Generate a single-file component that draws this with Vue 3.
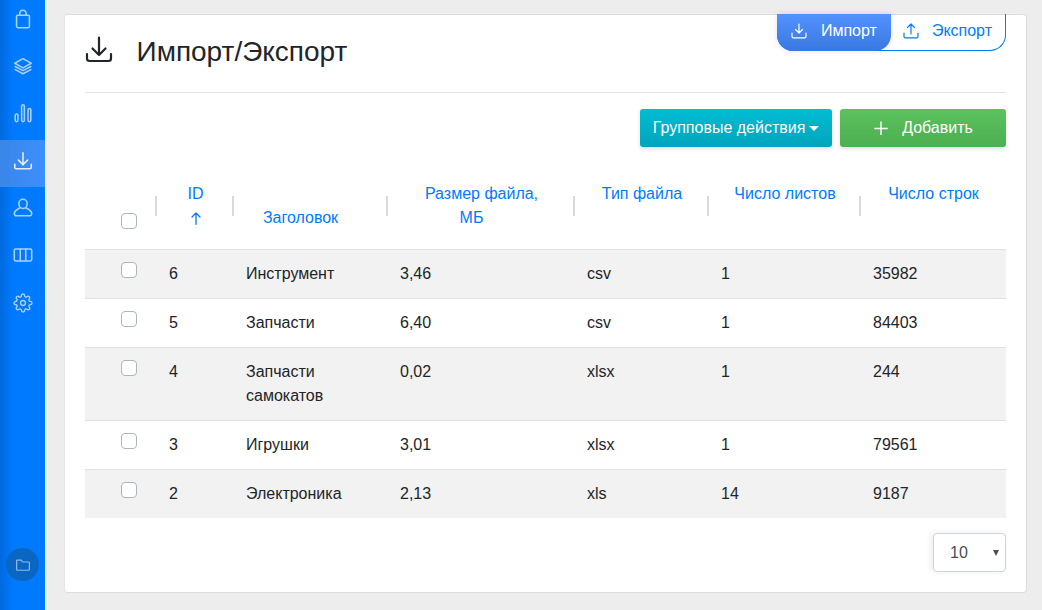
<template>
  <div class="page">
    <!-- Боковое меню -->
    <aside class="sidebar">
      <nav class="nav">
        <a
          v-for="item in menu"
          :key="item.id"
          class="nav-item"
          :class="{ active: item.id === 'import' }"
        >
          <svg :viewBox="item.box || '0 0 24 24'" class="nav-icon" fill="none" stroke="currentColor" stroke-width="1.7" stroke-linecap="round" stroke-linejoin="round">
            <path v-for="(d, i) in item.paths" :key="i" :d="d" />
          </svg>
        </a>
      </nav>
      <div class="folder">
        <svg viewBox="0 0 24 24" fill="none" stroke="currentColor" stroke-width="1.6" stroke-linejoin="round">
          <path d="M3.500 18V6.500c0-.6.4-1 1-1h5l2 2.500h8c.6 0 1 .4 1 1V18c0 .6-.4 1-1 1h-15c-.6 0-1-.4-1-1z" />
        </svg>
      </div>
    </aside>

    <main class="content">
      <section class="card">
        <header class="head">
          <div class="title-wrap">
            <svg class="title-icon" viewBox="0 0 28 28" fill="none" stroke="currentColor" stroke-width="2.2" stroke-linecap="round" stroke-linejoin="round">
              <path d="M14 1.500V19M7.500 12.500 14 19l6.500-6.500M2 18v4.500C2 24 3 25 4.500 25h19c1.500 0 2.500-1 2.500-2.500V18" />
            </svg>
            <h1 class="title">Импорт/Экспорт</h1>
          </div>
          <div class="tabs">
            <button class="tab tab-on">
              <svg viewBox="0 0 16 16" fill="none" stroke="currentColor" stroke-width="1.200" stroke-linecap="round" stroke-linejoin="round">
                <path d="M8 1v9M4.500 6.500 8 10l3.500-3.500M1 10v3.500c0 .8.500 1.300 1.300 1.300h11.400c.8 0 1.300-.5 1.300-1.300V10" />
              </svg>
              <span>Импорт</span>
            </button>
            <button class="tab tab-off">
              <svg viewBox="0 0 16 16" fill="none" stroke="currentColor" stroke-width="1.200" stroke-linecap="round" stroke-linejoin="round">
                <path d="M8 11V1M4.500 4.500 8 1l3.500 3.500M1 10v3.500c0 .8.500 1.300 1.300 1.300h11.400c.8 0 1.300-.5 1.300-1.300V10" />
              </svg>
              <span>Экспорт</span>
            </button>
          </div>
        </header>

        <div class="toolbar">
          <button class="btn btn-info">Групповые действия<i class="caret"></i></button>
          <button class="btn btn-success">
            <svg viewBox="0 0 14 14" fill="none" stroke="currentColor" stroke-width="1.400"><path d="M8 .5v13.500M1.300 7.500h13.400" /></svg>
            <span>Добавить</span>
          </button>
        </div>

        <table class="table">
          <colgroup>
            <col v-for="w in widths" :key="w" :style="{ width: w + 'px' }" />
          </colgroup>
          <thead>
            <tr>
              <th class="th-check"><span class="check"></span></th>
              <th class="sep">
                <a>ID</a>
                <span class="sort">
                  <svg viewBox="0 0 10 13" fill="none" stroke="currentColor" stroke-width="1.300" stroke-linecap="round" stroke-linejoin="round"><path d="M5 12.300V1M1 5l4-4 4 4" /></svg>
                </span>
              </th>
              <th class="sep th-title"><a>Заголовок</a></th>
              <th class="sep"><a>Размер файла,<br /><span class="unit">МБ</span></a></th>
              <th class="sep"><a>Тип файла</a><span class="sort"></span></th>
              <th class="sep"><a>Число листов</a><span class="sort"></span></th>
              <th class="sep"><a>Число строк</a><span class="sort"></span></th>
            </tr>
          </thead>
          <tbody>
            <tr v-for="row in rows" :key="row.id">
              <td class="td-check"><span class="check"></span></td>
              <td>{{ row.id }}</td>
              <td>{{ row.title }}</td>
              <td>{{ row.size }}</td>
              <td>{{ row.type }}</td>
              <td>{{ row.sheets }}</td>
              <td>{{ row.lines }}</td>
            </tr>
          </tbody>
        </table>

        <div class="pager">
          <div class="per-page"><span>10</span><i class="mini-caret"></i></div>
        </div>
      </section>
    </main>
  </div>
</template>

<script setup>
const widths = [72, 77, 154, 187, 134, 152, 145];

const menu = [
  { id: "bag", paths: ["M6 8h12a1 1 0 0 1 1 1v11a1.500 1.500 0 0 1-1.500 1.500h-11A1.500 1.500 0 0 1 5 20V9a1 1 0 0 1 1-1z", "M8.500 8V6a3.500 3.500 0 0 1 7 0v2"] },
  { id: "layers", paths: ["M12 4 3 9l9 5 9-5-9-5z", "M3.500 12.500 12 17l8.500-4.500", "M3.500 16 12 20.500 20.500 16"] },
  { id: "chart", paths: ["M3.500 14.500a1.500 1.500 0 0 1 3 0V20a1.500 1.500 0 0 1-3 0z", "M10.500 4.500a1.500 1.500 0 0 1 3 0V20a1.500 1.500 0 0 1-3 0z", "M17.500 8.500a1.500 1.500 0 0 1 3 0V20a1.500 1.500 0 0 1-3 0z"] },
  { id: "import", paths: ["M12 3v13", "M7 11l5 5 5-5", "M3 15.500V19c0 1 .6 1.500 1.500 1.500h15c.9 0 1.500-.5 1.500-1.500v-3.500"] },
  { id: "user", paths: ["M12 2.500a4.500 4.500 0 0 1 4.500 4.500c0 2.500-1.500 5.500-4.500 5.500S7.500 9.500 7.500 7A4.500 4.500 0 0 1 12 2.500z", "M8.500 12C5.500 13.500 2.500 15 2.500 18c0 1.500 1 2.500 2.500 2.500h14c1.500 0 2.500-1 2.500-2.500 0-3-3-4.500-6-6"] },
  { id: "columns", paths: ["M4 5.500h16a1.500 1.500 0 0 1 1.500 1.500v10a1.500 1.500 0 0 1-1.500 1.500H4A1.500 1.500 0 0 1 2.500 17V7A1.500 1.500 0 0 1 4 5.500z", "M9 5.500v13", "M15 5.500v13"] },
  {
    id: "gear",
    box: "-1.5 -1.5 27 27",
    paths: [
      "M12 9a3 3 0 1 0 0 6 3 3 0 0 0 0-6z",
      "M19.400 15a1.650 1.650 0 0 0 .33 1.820l.06.06a2 2 0 0 1 0 2.830 2 2 0 0 1-2.830 0l-.06-.06a1.650 1.650 0 0 0-1.820-.33 1.650 1.650 0 0 0-1 1.510V21a2 2 0 0 1-2 2 2 2 0 0 1-2-2v-.09A1.650 1.650 0 0 0 9 19.400a1.650 1.650 0 0 0-1.820.33l-.06.06a2 2 0 0 1-2.830 0 2 2 0 0 1 0-2.830l.06-.06a1.650 1.650 0 0 0 .33-1.820 1.650 1.650 0 0 0-1.510-1H3a2 2 0 0 1-2-2 2 2 0 0 1 2-2h.09A1.650 1.650 0 0 0 4.600 9a1.650 1.650 0 0 0-.33-1.820l-.06-.06a2 2 0 0 1 0-2.830 2 2 0 0 1 2.830 0l.06.06a1.650 1.650 0 0 0 1.820.33H9a1.650 1.650 0 0 0 1-1.510V3a2 2 0 0 1 2-2 2 2 0 0 1 2 2v.09a1.650 1.650 0 0 0 1 1.510 1.650 1.650 0 0 0 1.820-.33l.06-.06a2 2 0 0 1 2.830 0 2 2 0 0 1 0 2.830l-.06.06a1.650 1.650 0 0 0-.33 1.820V9a1.650 1.650 0 0 0 1.510 1H21a2 2 0 0 1 2 2 2 2 0 0 1-2 2h-.09a1.650 1.650 0 0 0-1.510 1z",
    ],
  },
];

const rows = [
  { id: 6, title: "Инструмент", size: "3,46", type: "csv", sheets: 1, lines: 35982 },
  { id: 5, title: "Запчасти", size: "6,40", type: "csv", sheets: 1, lines: 84403 },
  { id: 4, title: "Запчасти самокатов", size: "0,02", type: "xlsx", sheets: 1, lines: 244 },
  { id: 3, title: "Игрушки", size: "3,01", type: "xlsx", sheets: 1, lines: 79561 },
  { id: 2, title: "Электроника", size: "2,13", type: "xls", sheets: 14, lines: 9187 },
];
</script>

<style>
html,
body {
  margin: 0;
  background: #ededed;
}
</style>

<style scoped>
.page {
  display: flex;
  height: 610px;
  overflow: hidden;
  font-family: "Liberation Sans", Arial, sans-serif;
  font-size: 16px;
  line-height: 24px;
  color: #212529;
}

.sidebar {
  width: 45px;
  flex-shrink: 0;
  display: flex;
  flex-direction: column;
  background: linear-gradient(90deg, #006ae0 0, #007bff 14px);
}

.nav {
  flex: 1;
  margin-top: -2.2px;
}

.nav-item {
  display: flex;
  align-items: center;
  justify-content: center;
  box-sizing: border-box;
  height: 47.4px;
  padding-bottom: 6px;
  color: #a9d0ff;
}

.nav-item.active {
  background: linear-gradient(90deg, #3a86e8 0, #3d8fff 100%);
  color: #e4f0ff;
}

.nav-icon {
  width: 22px;
  height: 22px;
}

.folder {
  width: 33px;
  height: 33px;
  margin: 0 0 29px 6px;
  border-radius: 50%;
  background: #0b66c3;
  color: #8cbcf0;
  display: flex;
  align-items: center;
  justify-content: center;
}

.folder svg {
  width: 18px;
  height: 18px;
}

.content {
  flex: 1;
  padding: 14px 15px 17px 19px;
}

.card {
  height: 100%;
  box-sizing: border-box;
  background: #fff;
  border: 1px solid #dcdcdc;
  border-left-color: #e6e6e6;
  border-radius: 4px;
  padding: 0 20px;
}

.head {
  display: flex;
  justify-content: space-between;
  height: 77px;
  border-bottom: 1px solid #e3e3e3;
}

.title-wrap {
  display: flex;
  align-items: center;
  padding-bottom: 4px;
}

.title-icon {
  width: 28px;
  height: 28px;
  margin-bottom: 4px;
  color: #212529;
}

.title {
  margin: 0 0 0 23.5px;
  font-size: 28px;
  font-weight: 400;
  line-height: 34px;
}

.tabs {
  display: flex;
  align-self: flex-start;
  height: 37px;
  margin-top: -1px;
  box-sizing: border-box;
  border: 1px solid #007bff;
  border-top: 0;
  border-radius: 0 0 16px 16px;
}

.tab {
  display: flex;
  align-items: center;
  margin: 0;
  padding: 0 0 3px;
  border: 0;
  background: none;
  font: inherit;
  color: #007bff;
}

.tab svg {
  width: 16px;
  height: 16px;
}

.tab-on {
  gap: 14px;
  margin: 0 0 -1px -1px;
  width: 114px;
  padding-left: 14px;
  color: #fff;
  border-radius: 0 0 16px 16px;
  background: linear-gradient(180deg, #5292ff 0, #3a78e0 100%);
  box-shadow: 0 0 6px rgba(0, 0, 0, 0.12);
}

.tab-off {
  gap: 13px;
  padding-left: 12px;
  padding-right: 13px;
}

.toolbar {
  display: flex;
  justify-content: flex-end;
  gap: 8px;
  margin-top: 16px;
}

.btn {
  display: flex;
  align-items: center;
  justify-content: center;
  height: 38px;
  padding: 0;
  border: 0;
  border-radius: 3px;
  color: #fff;
  font: inherit;
  box-shadow: 0 2px 4px rgba(0, 0, 0, 0.12);
}

.btn-info {
  width: 192px;
  background: linear-gradient(180deg, #00bcd4 0, #00a5bb 100%);
}

.caret {
  margin-left: 4px;
  border-top: 5px solid #fff;
  border-left: 5px solid transparent;
  border-right: 5px solid transparent;
}

.btn-success {
  width: 166px;
  gap: 15px;
  background: linear-gradient(180deg, #5cc15f 0, #4caf50 100%);
}

.btn-success svg {
  width: 14px;
  height: 14px;
  overflow: visible;
}

.table {
  width: 921px;
  margin-top: 22px;
  border-collapse: collapse;
  table-layout: fixed;
}

.table th {
  position: relative;
  padding: 13px 12px 19px;
  font-weight: 400;
  text-align: center;
  vertical-align: bottom;
  color: #007bff;
}

.table .th-title {
  padding-right: 33px;
}

.table th.sep::before {
  content: "";
  position: absolute;
  left: -2px;
  top: 27px;
  height: 20px;
  width: 2px;
  background: #dadada;
}

.sort {
  display: flex;
  align-items: center;
  justify-content: center;
  height: 24px;
}

.sort svg {
  width: 10px;
  height: 13px;
}

.unit {
  margin-right: 20px;
}

.table td {
  padding: 12px;
  border-top: 1px solid #dee2e6;
  vertical-align: top;
}

tbody tr:nth-child(odd) {
  background: #f2f2f2;
}

.table .th-check {
  text-align: left;
  padding: 12px 0 20px 36px;
}

.table .td-check {
  padding: 12px 0 12px 36px;
}

.check {
  display: block;
  box-sizing: border-box;
  width: 16px;
  height: 16px;
  background: #fff;
  border: 1px solid #adb5bd;
  border-radius: 4px;
}

.pager {
  display: flex;
  justify-content: flex-end;
  margin-top: 15px;
}

.per-page {
  position: relative;
  box-sizing: border-box;
  width: 73px;
  height: 39px;
  padding: 7px 0 0 16px;
  border: 1px solid #ced4da;
  border-radius: 4px;
  color: #495057;
  box-shadow: -2px 0 6px rgba(0, 0, 0, 0.08);
}

.mini-caret {
  position: absolute;
  right: 6px;
  top: 16px;
  border-top: 6px solid #495057;
  border-left: 3px solid transparent;
  border-right: 3px solid transparent;
}
</style>
